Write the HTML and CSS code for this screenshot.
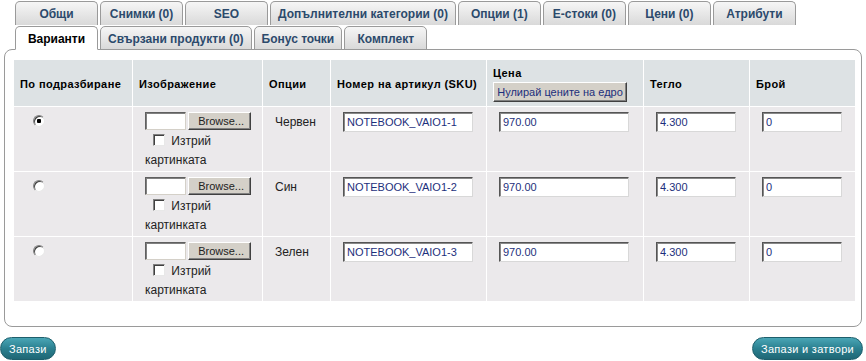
FILE: index.html
```html
<!DOCTYPE html>
<html lang="bg">
<head>
    <meta charset="UTF-8" />
    <title>Варианти</title>
    <link rel="stylesheet" href="styles.css">
</head>
<body>
<div class="tabs">
    <div class="tab-row">
        <a class="tab" href="#">Общи</a>
        <a class="tab" href="#">Снимки (0)</a>
        <a class="tab" href="#">SEO</a>
        <a class="tab" href="#">Допълнителни категории (0)</a>
        <a class="tab" href="#">Опции (1)</a>
        <a class="tab" href="#">Е-стоки (0)</a>
        <a class="tab" href="#">Цени (0)</a>
        <a class="tab" href="#">Атрибути</a>
    </div>
    <div class="tab-row lower">
        <a class="tab active" href="#">Варианти</a>
        <a class="tab" href="#">Свързани продукти (0)</a>
        <a class="tab" href="#">Бонус точки</a>
        <a class="tab" href="#">Комплект</a>
    </div>
</div>

<div class="panel">
    <table class="variants">
        <thead>
            <tr>
                <th class="c-def">По подразбиране</th>
                <th class="c-img">Изображение</th>
                <th class="c-opt">Опции</th>
                <th class="c-sku">Номер на артикул (SKU)</th>
                <th class="c-price">Цена<br><button class="btn-reset">Нулирай цените на едро</button></th>
                <th class="c-weight">Тегло</th>
                <th class="c-qty">Брой</th>
            </tr>
        </thead>
        <tbody>
            <tr>
                <td><input type="radio" name="default" class="radio" checked></td>
                <td>
                    <div class="file"><input type="text" class="file-box"><button class="btn-browse">Browse...</button></div>
                    <label class="del"><input type="checkbox" class="check"> Изтрий картинката</label>
                </td>
                <td class="opt-name">Червен</td>
                <td><input type="text" class="field wide" value="NOTEBOOK_VAIO1-1"></td>
                <td><input type="text" class="field wide" value="970.00"></td>
                <td><input type="text" class="field narrow" value="4.300"></td>
                <td><input type="text" class="field narrow" value="0"></td>
            </tr>
            <tr>
                <td><input type="radio" name="default" class="radio"></td>
                <td>
                    <div class="file"><input type="text" class="file-box"><button class="btn-browse">Browse...</button></div>
                    <label class="del"><input type="checkbox" class="check"> Изтрий картинката</label>
                </td>
                <td class="opt-name">Син</td>
                <td><input type="text" class="field wide" value="NOTEBOOK_VAIO1-2"></td>
                <td><input type="text" class="field wide" value="970.00"></td>
                <td><input type="text" class="field narrow" value="4.300"></td>
                <td><input type="text" class="field narrow" value="0"></td>
            </tr>
            <tr>
                <td><input type="radio" name="default" class="radio"></td>
                <td>
                    <div class="file"><input type="text" class="file-box"><button class="btn-browse">Browse...</button></div>
                    <label class="del"><input type="checkbox" class="check"> Изтрий картинката</label>
                </td>
                <td class="opt-name">Зелен</td>
                <td><input type="text" class="field wide" value="NOTEBOOK_VAIO1-3"></td>
                <td><input type="text" class="field wide" value="970.00"></td>
                <td><input type="text" class="field narrow" value="4.300"></td>
                <td><input type="text" class="field narrow" value="0"></td>
            </tr>
        </tbody>
    </table>
</div>

<div class="actions">
    <button class="btn-save">Запази</button>
    <button class="btn-save">Запази и затвори</button>
</div>
</body>
</html>
```

FILE: styles.css
```css
body {
  margin: 0;
  font-family: "Liberation Sans", Arial, sans-serif;
  font-size: 12px;
  color: #222;
  background-color: #fff;
}

/* tabs */

.tabs {
  padding: 1px 0 0 15px;
}

.tab-row {
  display: flex;
  gap: 2px;
}

.tab-row.lower {
  margin-top: 1px;
  margin-bottom: -1px;
  position: relative;
  z-index: 1;
}

.tab {
  box-sizing: border-box;
  min-width: 83px;
  height: 24px;
  padding: 1px 7px 0;
  display: flex;
  align-items: center;
  justify-content: center;
  border: 1px solid #9a9a9a;
  border-bottom: none;
  border-radius: 5px 5px 0 0;
  background: linear-gradient(#f6f6f6, #d9d9d9);
  color: #2c4a6c;
  font-weight: bold;
  font-size: 12px;
  text-decoration: none;
  white-space: nowrap;
}

.lower .tab {
  border-bottom: 1px solid #9a9a9a;
}

.lower .tab.active {
  background: #fff;
  color: #000;
  border-bottom-color: #fff;
}

/* panel */

.panel {
  margin: 0 4px;
  border: 1px solid #9a9a9a;
  border-radius: 8px;
  padding: 10px 6px 24px 9px;
}

.variants {
  width: 841px;
  border-collapse: separate;
  border-spacing: 0;
  table-layout: fixed;
}

.variants th,
.variants td {
  box-sizing: border-box;
  border-right: 1px solid #fff;
  border-bottom: 1px solid #fff;
  text-align: left;
}

.variants th:last-child,
.variants td:last-child {
  border-right: none;
}

.variants th {
  height: 47px;
  padding: 2px 0 0 6px;
  background-color: #dde2e4;
  font-size: 11px;
  letter-spacing: 0.4px;
  color: #000;
  vertical-align: middle;
}

.variants td {
  height: 65px;
  padding: 5px 0 0 12px;
  background-color: #ebe9eb;
  vertical-align: top;
  color: #222;
}

.variants td.opt-name {
  padding-top: 8px;
}

.c-def { width: 119px; }
.c-img { width: 130px; }
.c-opt { width: 68px; }
.c-sku { width: 156px; }
.c-price { width: 157px; }
.c-weight { width: 106px; }
.c-qty { width: 105px; }

.variants td .radio {
  appearance: none;
  box-sizing: border-box;
  width: 12px;
  height: 12px;
  margin: 3px 0 0 7px;
  border: 1px solid;
  border-color: #808080 #e8e8e8 #e8e8e8 #808080;
  border-radius: 50%;
  background: #fff;
  box-shadow: inset 1px 1px 0 #404040;
}

.variants td .radio:checked {
  background: radial-gradient(circle, #000 0 2px, #fff 2.5px);
}

/* form bits */

.file {
  display: flex;
  gap: 2px;
  height: 18px;
}

.file-box {
  box-sizing: border-box;
  width: 41px;
  height: 18px;
  margin: 0;
  border: 1px solid;
  border-color: #606060 #d4d0c8 #d4d0c8 #606060;
  box-shadow: inset 1px 1px 0 #808080;
  background: #fff;
}

.btn-browse {
  box-sizing: border-box;
  width: 63px;
  height: 18px;
  padding: 0 6px 0 0;
  border: 1px solid;
  border-color: #fff #404040 #404040 #fff;
  box-shadow: inset -1px -1px 0 #808080;
  background: #d4d0c8;
  font-family: "Liberation Sans", Arial, sans-serif;
  font-size: 11px;
  color: #222;
  text-align: right;
}

.del {
  display: block;
  margin-top: 2px;
  line-height: 19px;
  font-size: 12px;
}

.check {
  appearance: none;
  box-sizing: border-box;
  width: 12px;
  height: 12px;
  margin: 0 3px 0 8px;
  vertical-align: -1px;
  border: 1px solid;
  border-color: #808080 #e8e8e8 #e8e8e8 #808080;
  box-shadow: inset 1px 1px 0 #404040;
  background: #fff;
}

.field {
  box-sizing: border-box;
  height: 20px;
  margin: 0;
  padding: 0 3px;
  border: 1px solid;
  border-color: #555 #d8d8d8 #d8d8d8 #555;
  box-shadow: inset 1px 1px 0 #888;
  background: #fff;
  font-family: "Liberation Sans", Arial, sans-serif;
  font-size: 11px;
  color: #1d2f7c;
}

.field.wide {
  width: 130px;
}

.field.narrow {
  width: 80px;
}

.btn-reset {
  box-sizing: border-box;
  width: 134px;
  height: 20px;
  margin: 3px 0 0 0;
  padding: 0;
  border: 1px solid;
  border-color: #fff #404040 #404040 #fff;
  box-shadow: inset -1px -1px 0 #808080;
  background: #d4d0c8;
  font-family: "Liberation Sans", Arial, sans-serif;
  font-size: 11px;
  font-weight: normal;
  letter-spacing: 0;
  white-space: nowrap;
  color: #1d2f7c;
}

/* bottom buttons */

.actions {
  display: flex;
  justify-content: space-between;
  margin: 10px 3px 0 0;
}

.btn-save {
  height: 23px;
  padding: 0 8px;
  border: 1px solid #1e5f6c;
  border-radius: 12px;
  background: linear-gradient(#4aa6b6, #2b8090 50%, #1f6775);
  color: #fff;
  font-family: "Liberation Sans", Arial, sans-serif;
  font-size: 11px;
  letter-spacing: 0.3px;
}
```
